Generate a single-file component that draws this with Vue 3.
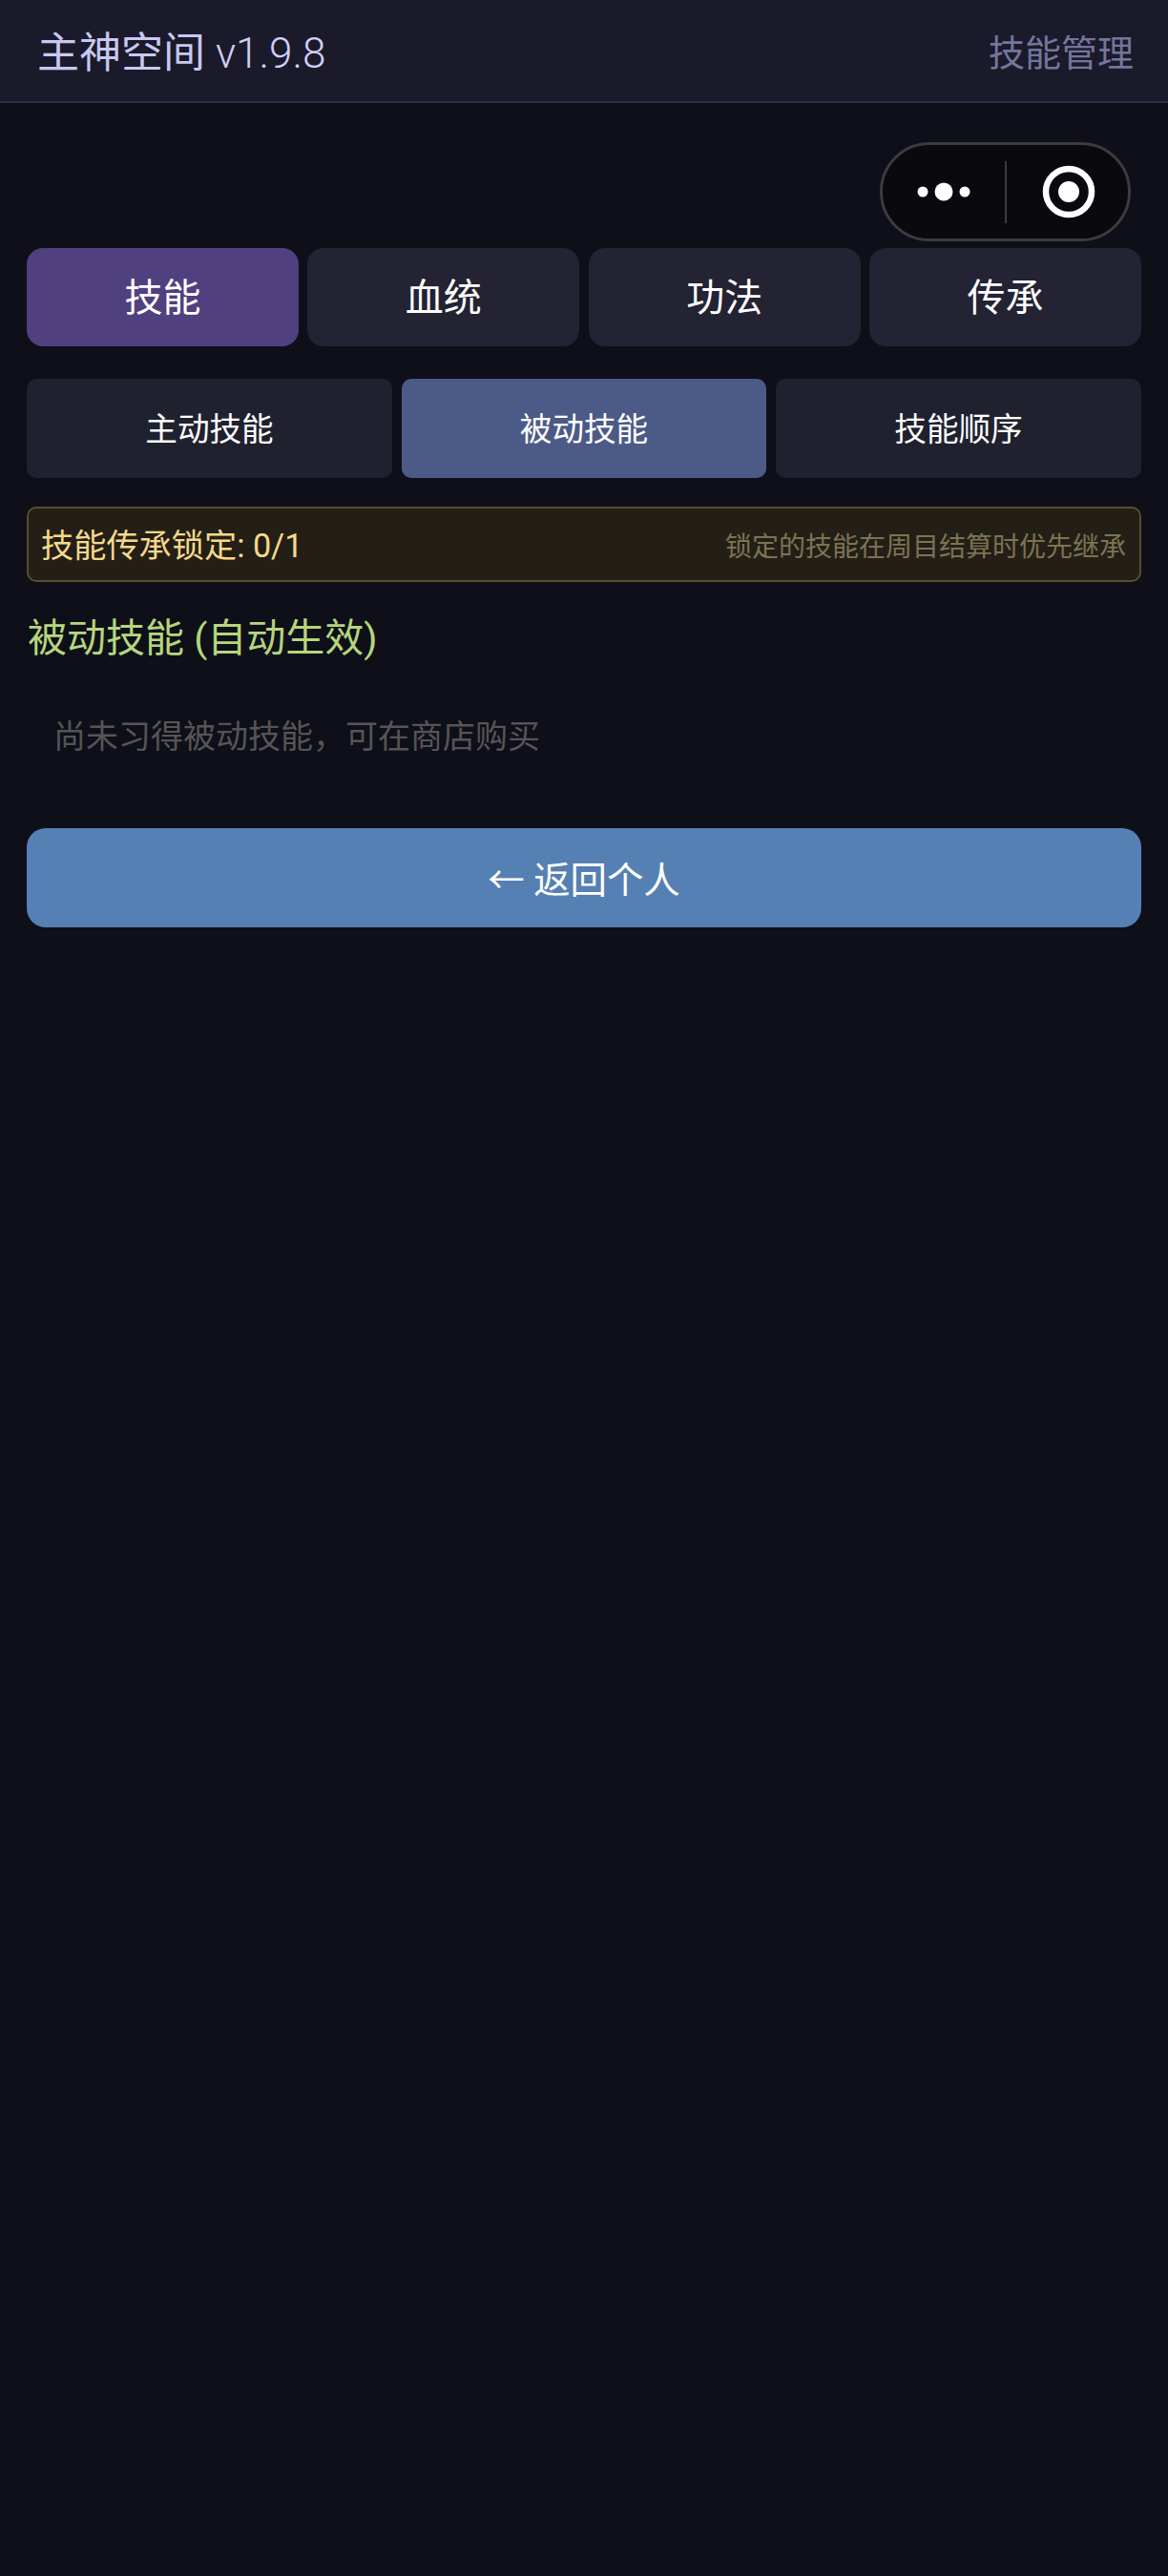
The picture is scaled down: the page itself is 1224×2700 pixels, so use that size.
<template>
  <div class="page">
    <div class="top-bar">
      <span class="app-title">主神空间 <span class="version">v1.9.8</span></span>
      <span class="page-name">技能管理</span>
    </div>

    <!-- wechat capsule, sits over the page -->
    <div class="capsule">
      <div class="capsule-side dots">
        <svg width="56" height="24" viewBox="0 0 56 24">
          <circle cx="6" cy="12" r="5.5" fill="#fff" />
          <circle cx="28" cy="12" r="9.5" fill="#fff" />
          <circle cx="50" cy="12" r="5.5" fill="#fff" />
        </svg>
      </div>
      <div class="capsule-line"></div>
      <div class="capsule-side ring">
        <svg width="56" height="56" viewBox="0 0 56 56">
          <circle cx="28" cy="28" r="24" fill="none" stroke="#fff" stroke-width="6.5" />
          <circle cx="28" cy="28" r="11" fill="#fff" />
        </svg>
      </div>
    </div>

    <div class="content">
      <div class="main-tabs">
        <button
          v-for="t in mainTabs" :key="t"
          :class="['main-tab', { active: currentMain === t }]"
          @click="currentMain = t"
        >
          {{ t }}
        </button>
      </div>

      <div class="sub-tabs">
        <button
          v-for="t in subTabs" :key="t"
          :class="['sub-tab', { active: currentSub === t }]"
          @click="currentSub = t"
        >
          {{ t }}
        </button>
      </div>

      <div class="lock-bar">
        <span class="lock-count">技能传承锁定: {{ locked }}/{{ lockMax }}</span>
        <span class="lock-hint">锁定的技能在周目结算时优先继承</span>
      </div>

      <div class="section-title">被动技能 (自动生效)</div>
      <div class="empty-text">尚未习得被动技能，可在商店购买</div>

      <button class="back-btn">← 返回个人</button>
    </div>
  </div>
</template>

<script setup>
import { ref } from 'vue';

const mainTabs = ['技能', '血统', '功法', '传承'];
const subTabs = ['主动技能', '被动技能', '技能顺序'];

const currentMain = ref('技能');
const currentSub = ref('被动技能');
const locked = ref(0);
const lockMax = ref(1);
</script>

<style>
html, body { margin: 0; background: #0e0f18; }
</style>

<style scoped>
.page { position: relative; min-height: 2700px; background: #0e0f18; font-family: "Roboto", "Noto Sans CJK SC", sans-serif; color: #fff; }
button { font-family: inherit; border: none; color: #fff; padding: 0; cursor: pointer; }

.top-bar { height: 108px; box-sizing: border-box; padding: 0 36px 2px 39px; display: flex; justify-content: space-between; align-items: center; background: #1a1a2a; border-bottom: 2px solid #2d2d45; }
.app-title { font-size: 44px; color: #c8c8f0; font-weight: 400; }
.version { font-size: 44px; font-weight: 300; color: #d0d0f5; }
.page-name { font-size: 38px; color: #75759c; font-weight: 400; }

.capsule { position: absolute; left: 922px; top: 149px; width: 263px; height: 104px; box-sizing: border-box; display: flex; align-items: center; background: #09090e; border: 3px solid #3c3c40; border-radius: 52px; }
.capsule-side { display: flex; justify-content: center; align-items: center; }
.capsule-side.dots { width: 128px; }
.capsule-side.ring { flex: 1; padding-left: 2px; }
.capsule-line { width: 2px; height: 65px; background: #3c3c40; }

.content { padding: 152px 28px 0; }

.main-tabs { display: grid; grid-template-columns: repeat(4, 1fr); gap: 9.6px; }
.main-tab { height: 103px; padding-bottom: 5px; font-size: 40px; font-weight: 400; border-radius: 17px; background: #232333; }
.main-tab.active { background: #50407f; }

.sub-tabs { display: grid; grid-template-columns: repeat(3, 1fr); gap: 9.6px; margin-top: 34px; }
.sub-tab { height: 104px; padding-bottom: 3px; font-size: 33.6px; font-weight: 400; border-radius: 10px; background: #1f212f; }
.sub-tab.active { background: #4c5a87; }

.lock-bar { height: 79px; box-sizing: border-box; margin-top: 30px; padding: 0 14px 0 13px; display: flex; justify-content: space-between; align-items: center; background: #231f16; border: 2px solid #5a4c2d; border-radius: 10px; }
.lock-count { font-size: 34.2px; font-weight: 400; color: #f5d98a; margin-top: -4px; }
.lock-hint { font-size: 28px; font-weight: 400; color: #7d7352; }

.section-title { margin-top: 31px; padding-left: 1px; font-size: 41px; line-height: 56px; font-weight: 400; color: #b5d67c; }

.empty-text { margin-top: 51px; padding-left: 28px; font-size: 34px; line-height: 48px; font-weight: 400; color: #555; }

.back-btn { display: block; width: 100%; height: 104px; margin-top: 72px; padding-bottom: 2px; font-size: 38.4px; font-weight: 400; border-radius: 20px; background: #5580b3; }
</style>
